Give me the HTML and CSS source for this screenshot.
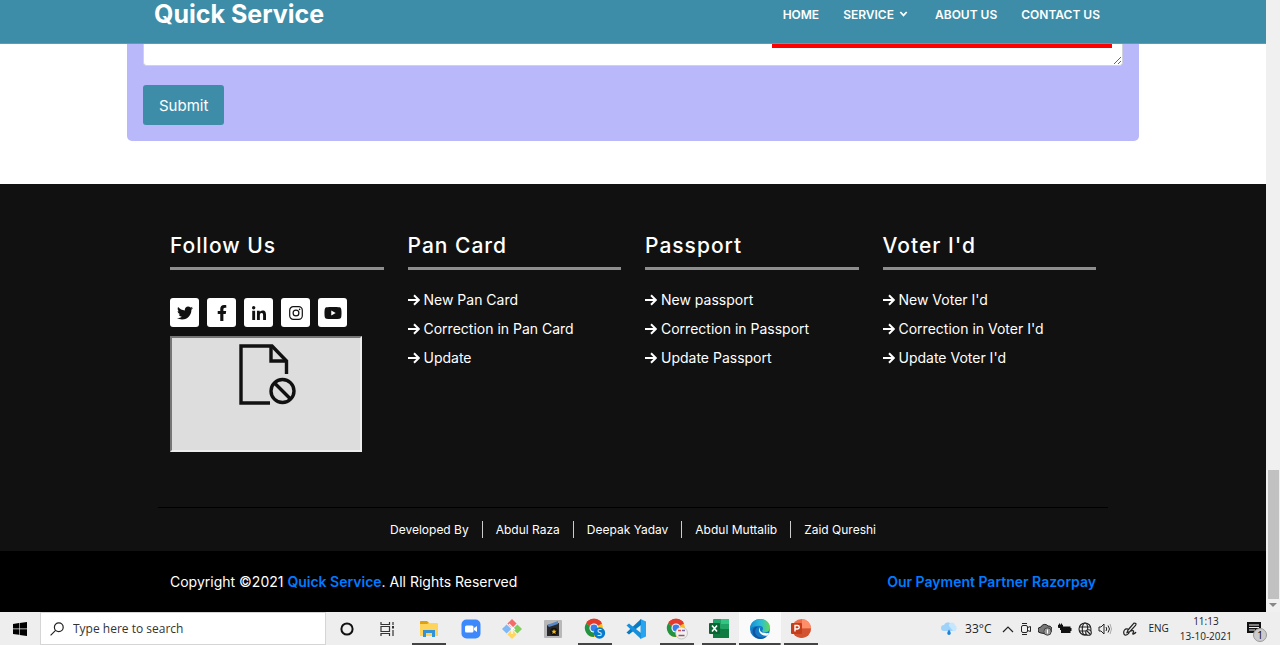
FILE: index.html
```html
<!DOCTYPE html>
<html lang="en">
<head>
<meta charset="utf-8">
<meta name="viewport" content="width=device-width, initial-scale=1">
<title>Quick Service</title>
<link rel="stylesheet" href="styles.css">
</head>
<body>
<svg class="defs" aria-hidden="true">
  <symbol id="arrow" viewBox="0 0 12 12"><path d="M0 6h10.5M6 1.2L10.8 6 6 10.8" fill="none" stroke="currentColor" stroke-width="2"/></symbol>
  <symbol id="chrome" viewBox="0 0 22 22">
    <circle cx="11" cy="11" r="10" fill="#fbc116"/>
    <path d="M11 11L2.3 6A10 10 0 0 1 19.7 6z" fill="#e33b2e"/>
    <path d="M11 11L2.3 6A10 10 0 0 0 11 21z" fill="#229342"/>
    <path d="M2.3 6A10 10 0 0 1 19.7 6H11z" fill="#e33b2e"/>
    <circle cx="11" cy="11" r="5" fill="#fff"/><circle cx="11" cy="11" r="3.8" fill="#3b7ded"/>
  </symbol>
</svg>
<div class="browser">
  <div class="page">
    <header class="header">
      <a class="brand" href="#">Quick Service</a>
      <nav class="nav">
        <a href="#">HOME</a>
        <a href="#" class="has-menu">SERVICE <svg width="9" height="6" viewBox="0 0 8 6"><path d="M.8 1L4 4.400 7.200 1" fill="none" stroke="currentColor" stroke-width="1.800"/></svg></a>
        <a href="#">ABOUT US</a>
        <a href="#">CONTACT US</a>
      </nav>
    </header>
    <main class="main">
      <form class="form">
        <span class="marker"></span>
        <textarea class="message" aria-label="Message"></textarea>
        <button class="submit" type="button">Submit</button>
      </form>
    </main>
    <footer class="footer">
      <div class="columns">
        <section class="column">
          <h2>Follow Us</h2>
          <div class="social">
            <a href="#" aria-label="Twitter"><svg width="16" height="16" viewBox="0 0 512 512"><path d="M459.37 151.716c.325 4.548.325 9.097.325 13.645 0 138.72-105.583 298.558-298.558 298.558-59.452 0-114.68-17.219-161.137-47.106 8.447.974 16.568 1.299 25.34 1.299 49.055 0 94.213-16.568 130.274-44.832-46.132-.975-84.792-31.188-98.112-72.772 6.498.974 12.995 1.624 19.818 1.624 9.421 0 18.843-1.3 27.614-3.573-48.081-9.747-84.143-51.98-84.143-102.985v-1.299c13.969 7.797 30.214 12.67 47.431 13.319-28.264-18.843-46.781-51.005-46.781-87.391 0-19.492 5.197-37.36 14.294-52.954 51.655 63.675 129.3 105.258 216.365 109.807-1.624-7.797-2.599-15.918-2.599-24.04 0-57.828 46.782-104.934 104.934-104.934 30.213 0 57.502 12.67 76.67 33.137 23.715-4.548 46.456-13.32 66.599-25.34-7.798 24.366-24.366 44.833-46.132 57.827 21.117-2.273 41.584-8.122 60.426-16.243-14.292 20.791-32.161 39.308-52.628 54.253z"/></svg></a>
            <a href="#" aria-label="Facebook"><svg width="10" height="16" viewBox="0 0 320 512"><path d="M279.14 288l14.22-92.66h-88.91v-60.13c0-25.35 12.42-50.06 52.24-50.06h40.42V6.26S260.43 0 225.36 0c-73.22 0-121.08 44.38-121.08 124.72v70.62H22.89V288h81.39v224h100.17V288z"/></svg></a>
            <a href="#" aria-label="LinkedIn"><svg width="14" height="14" viewBox="0 0 448 448"><path d="M100.28 448H7.4V148.9h92.88zM53.79 108.1C24.09 108.1 0 83.5 0 53.8a53.79 53.79 0 0 1 107.58 0c0 29.7-24.1 54.3-53.79 54.3zM447.9 448h-92.68V302.4c0-34.7-.7-79.2-48.29-79.2-48.29 0-55.69 37.7-55.69 76.7V448h-92.78V148.9h89.08v40.8h1.3c12.4-23.5 42.69-48.3 87.88-48.3 94 0 111.28 61.9 111.28 142.3V448z"/></svg></a>
            <a href="#" aria-label="Instagram"><svg width="14" height="14" viewBox="0 0 14 14" fill="none" stroke="#111" stroke-width="1.2"><rect x=".7" y=".7" width="12.6" height="12.6" rx="3.6"/><circle cx="7" cy="7" r="2.9"/><circle cx="10.6" cy="3.4" r=".8" fill="#111" stroke="none"/></svg></a>
            <a href="#" aria-label="YouTube"><svg width="18" height="16" viewBox="0 0 576 512"><path d="M549.655 124.083c-6.281-23.65-24.787-42.276-48.284-48.597C458.781 64 288 64 288 64S117.22 64 74.629 75.486c-23.497 6.322-42.003 24.947-48.284 48.597-11.412 42.867-11.412 132.305-11.412 132.305s0 89.438 11.412 132.305c6.281 23.65 24.787 41.5 48.284 47.821C117.22 448 288 448 288 448s170.78 0 213.371-11.486c23.497-6.321 42.003-24.171 48.284-47.821 11.412-42.867 11.412-132.305 11.412-132.305s0-89.438-11.412-132.305zm-317.51 213.508V175.185l142.739 81.205-142.739 81.201z"/></svg></a>
          </div>
          <div class="embed">
            <svg width="58" height="62" viewBox="0 0 58 62" fill="none" stroke="#111" stroke-width="3.4"><path d="M31 59H2V2h31l14.5 15v13"/><path d="M32 2v15h15.500"/><circle cx="43.500" cy="47" r="11.500"/><path d="M35.500 39l16 16"/></svg>
          </div>
        </section>
        <section class="column">
          <h2>Pan Card</h2>
          <ul>
            <li><a href="#"><svg width="12" height="12"><use href="#arrow"/></svg>New Pan Card</a></li>
            <li><a href="#"><svg width="12" height="12"><use href="#arrow"/></svg>Correction in Pan Card</a></li>
            <li><a href="#"><svg width="12" height="12"><use href="#arrow"/></svg>Update</a></li>
          </ul>
        </section>
        <section class="column">
          <h2>Passport</h2>
          <ul>
            <li><a href="#"><svg width="12" height="12"><use href="#arrow"/></svg>New passport</a></li>
            <li><a href="#"><svg width="12" height="12"><use href="#arrow"/></svg>Correction in Passport</a></li>
            <li><a href="#"><svg width="12" height="12"><use href="#arrow"/></svg>Update Passport</a></li>
          </ul>
        </section>
        <section class="column">
          <h2>Voter I'd</h2>
          <ul>
            <li><a href="#"><svg width="12" height="12"><use href="#arrow"/></svg>New Voter I'd</a></li>
            <li><a href="#"><svg width="12" height="12"><use href="#arrow"/></svg>Correction in Voter I'd</a></li>
            <li><a href="#"><svg width="12" height="12"><use href="#arrow"/></svg>Update Voter I'd</a></li>
          </ul>
        </section>
      </div>
      <div class="credits">
        <a href="#">Developed By</a><a href="#">Abdul Raza</a><a href="#">Deepak Yadav</a><a href="#">Abdul Muttalib</a><a href="#">Zaid Qureshi</a>
      </div>
      <div class="legal">
        <div class="legal-inner">
          <p>Copyright ©2021 <a href="#">Quick Service</a>. All Rights Reserved</p>
          <a href="#">Our Payment Partner Razorpay</a>
        </div>
      </div>
    </footer>
  </div>
  <div class="scrollbar">
    <div class="thumb"></div>
    <svg width="8" height="5" viewBox="0 0 8 5"><path d="M0 0h8L4 4z" fill="#888"/></svg>
  </div>
</div>
<div class="taskbar">
  <button class="start" type="button" aria-label="Start"><svg width="14" height="14" viewBox="0 0 14 14"><path d="M0 2l6-.9v5.500H0zM6.600 1L14 0v6.600H6.600zM0 7.300h6v5.500L0 12zM6.600 7.300H14V14l-7.400-1z"/></svg></button>
  <label class="search">
    <svg width="14" height="14" viewBox="0 0 14 14" fill="none" stroke="#222" stroke-width="1.2"><circle cx="8.800" cy="5.200" r="4.400"/><path d="M5.600 8.400L.6 13.400"/></svg>
    <input type="text" placeholder="Type here to search" aria-label="Type here to search">
  </label>
  <div class="apps">
    <button type="button" aria-label="Cortana"><svg width="14" height="14" viewBox="0 0 14 14"><circle cx="7" cy="7" r="5.600" fill="none" stroke="#111" stroke-width="2"/></svg></button>
    <button type="button" aria-label="Task view"><svg width="15" height="14" viewBox="0 0 15 14" fill="none" stroke="#333" stroke-width="1.200"><path d="M1 0v2.500h8.500V0M1 14v-2.500h8.500V14M1 4.500h8.500v5H1zM13 0v3M13 8v6"/><path d="M12 4h2v2.500h-2z" fill="#333" stroke="none"/></svg></button>
    <button type="button" class="open" aria-label="File Explorer"><svg width="20" height="18" viewBox="0 0 20 18"><path d="M1 2q0-1 1-1h6l2 2h8q1 0 1 1v12H1z" fill="#ffd45c"/><path d="M1 2q0-1 1-1h6l2 2-2 1H1z" fill="#dfa00d"/><path d="M4 17v-7h12v7h-3v-4H7v4z" fill="#3292d8"/></svg></button>
    <button type="button" aria-label="Zoom"><svg width="20" height="20" viewBox="0 0 20 20"><rect x=".5" y=".5" width="19" height="19" rx="5" fill="#3d88fb"/><rect x="4" y="6.500" width="8.500" height="7" rx="1.500" fill="#fff"/><path d="M13 9l3-2v6l-3-2z" fill="#fff"/></svg></button>
    <button type="button" aria-label="Git"><svg width="20" height="20" viewBox="0 0 20 20"><path d="M10 0l4.600 4.600L10 9.200 5.400 4.600z" fill="#f36b6b"/><path d="M15.400 5.400L20 10l-4.600 4.600-4.600-4.600z" fill="#83cf5d"/><path d="M4.600 5.400L9.200 10l-4.600 4.600L0 10z" fill="#80b7f5"/><path d="M10 10.800l4.600 4.600L10 20l-4.600-4.600z" fill="#ffd65f"/><path d="M7 5l6 6M10 8v7" stroke="#fff" stroke-width="1.300"/></svg></button>
    <button type="button" aria-label="Media"><svg width="18" height="18" viewBox="0 0 18 18"><rect width="18" height="18" rx="1" fill="#b8b8b8"/><path d="M3 5l12-2v13H3z" fill="#292929"/><path d="M3 5l11-4v3L5 7z" fill="#5786c8"/><circle cx="10" cy="11.500" r="3.800" fill="#111"/><path d="M10 9l.7 1.800h2l-1.500 1.300.6 2-1.800-1.200-1.800 1.200.6-2-1.500-1.300h2z" fill="#f5bd15"/></svg></button>
    <button type="button" class="open" aria-label="Chrome profile S"><svg width="22" height="22" viewBox="0 0 22 22"><use href="#chrome" width="20" height="20"/><circle cx="15.500" cy="15" r="5.700" fill="#087bcb"/><text x="15.500" y="18" class="badge-letter">S</text></svg></button>
    <button type="button" aria-label="Visual Studio Code"><svg width="20" height="20" viewBox="0 0 20 20"><path d="M14.500 0L20 2.500v15L14.500 20z" fill="#27a4ef"/><path d="M15 0v6L3 15.500.5 13.500z" fill="#087bc5"/><path d="M15 20v-6L3 4.500.5 6.500z" fill="#1590dc"/></svg></button>
    <button type="button" class="open" aria-label="Chrome profile"><svg width="22" height="22" viewBox="0 0 22 22"><use href="#chrome" width="20" height="20"/><circle cx="15.500" cy="15" r="6" fill="#f3f0f0" stroke="#aaa" stroke-width=".6"/><path d="M12 12.500h3" stroke="#ec4d45" stroke-width="1.500"/><path d="M16 12.500h3" stroke="#7a62a8" stroke-width="1.500"/><path d="M12.500 17.500h6" stroke="#8b5e60" stroke-width="1.500"/></svg></button>
    <button type="button" class="open" aria-label="Excel"><svg width="20" height="19" viewBox="0 0 20 19"><rect x="4" width="16" height="19" rx="1" fill="#20a366"/><path d="M12 0h8v5h-8z" fill="#33c481"/><path d="M4 9.500h16V19H4z" fill="#107c41"/><path d="M12 5h8v5h-8z" fill="#21a366"/><rect y="4" width="11" height="11" rx="1" fill="#0b6433"/><path d="M3 6.500l5 6M8 6.500l-5 6" stroke="#fff" stroke-width="1.600"/></svg></button>
    <button type="button" class="open current" aria-label="Edge"><svg width="20" height="20" viewBox="0 0 20 20"><defs><linearGradient id="edge-top" x1="0" x2="1"><stop stop-color="#168bd4"/><stop offset=".55" stop-color="#2dbfd4"/><stop offset="1" stop-color="#67d951"/></linearGradient></defs><circle cx="10" cy="10" r="10" fill="#127ac7"/><path d="M0 9C1-3 20-3 20 9c0 4-6 6-8 3 3-4-1-6-5-5-3 0-6 1-7 4z" fill="url(#edge-top)"/><path d="M8 8c-7 5 0 14 9 9-3 4-10 4-13 0-3-5-1-10 4-9z" fill="#16559e"/><path d="M10.500 8c-2 3 0 7 8.500 6l-1.500 2.500C12 18 6 12 10.500 8z" fill="#f8f8f8"/></svg></button>
    <button type="button" class="open" aria-label="PowerPoint"><svg width="20" height="19" viewBox="0 0 20 19"><circle cx="10.500" cy="9.500" r="9.500" fill="#ed6c47"/><path d="M11 0a9.500 9.500 0 0 1 9 9.500h-9z" fill="#ff8f6b"/><path d="M1 9.500h19a9.500 9.500 0 0 1-19 0z" fill="#d35230"/><rect y="4" width="11" height="11" rx="1" fill="#c43e1c"/><path d="M4 12.500v-6h2.500a1.700 1.700 0 0 1 0 3.500H4" fill="none" stroke="#fff" stroke-width="1.400"/></svg></button>
  </div>
  <div class="tray">
    <div class="weather"><svg width="16" height="16" viewBox="0 0 16 16"><path d="M3 10a3 3 0 0 1 0-6 4 4 0 0 1 7-1 4 4 0 0 1 3 7z" fill="#9dd3fa"/><path d="M8 5a3 3 0 0 1 6-1q2 1 1.500 4T12 10z" fill="#c5e6fd"/><path d="M8 8.500q-3.500 5 0 5.500 3.500-.5 0-5.500" fill="#1683dc"/></svg><span>33°C</span></div>
    <div class="status">
      <svg width="12" height="14" viewBox="0 0 12 14"><path d="M1 10l5-5 5 5" fill="none" stroke="#222" stroke-width="1.200"/></svg>
      <svg width="12" height="14" viewBox="0 0 12 14" fill="none" stroke="#222"><rect x="1.500" y="3.500" width="6" height="7" rx="1.500"/><path d="M7.500 5.500l3-1v5l-3-1M2 1.500h5M2 12.500h5"/></svg>
      <svg width="14" height="14" viewBox="0 0 14 14"><path d="M3 11a3 3 0 0 1 0-6 4 4 0 0 1 7-1 3.500 3.500 0 0 1 3 6l-4 2z" fill="#777" stroke="#222"/><circle cx="9.500" cy="9.500" r="3.700" fill="#999" stroke="#444"/><path d="M9.500 7.500v4" stroke="#fff"/></svg>
      <svg width="14" height="12" viewBox="0 0 14 12"><path d="M3 3.500h9.500V5h1v3h-1v2H3z" fill="#111"/><path d="M.5 2h4v2.500h-4zM1.500.5V2M3.500.5V2M2.500 4v3" fill="#111" stroke="#111"/></svg>
      <svg width="14" height="14" viewBox="0 0 14 14" fill="none" stroke="#222" stroke-width="1.100"><circle cx="7" cy="7" r="6"/><ellipse cx="7" cy="7" rx="2.700" ry="6"/><path d="M1 5h12M1 9h7"/><circle cx="10.500" cy="10.500" r="2.800" fill="#eee"/><path d="M9 9l3 3"/></svg>
      <svg width="14" height="12" viewBox="0 0 14 12" fill="none" stroke="#222"><path d="M1 4h2l3-3v10L3 8H1zM8 4q1.500 2 0 4M10 2.500q3 3.500 0 7"/><path d="M12 1q3 5 0 10" stroke="#aaa"/></svg>
    </div>
    <svg width="14" height="14" viewBox="0 0 14 14" fill="none" stroke="#222" stroke-width="1.200"><path d="M5 8l6-7q3 0 1.500 2.500L7 9.500l-3 1zM5 7C2 6 0 9 1 12s6-1 5-2M8 9c3-1 3 0 2 2s2 1 3-1"/></svg>
    <span class="lang">ENG</span>
    <div class="clock"><span>11:13</span><span>13-10-2021</span></div>
    <button class="notice" type="button" aria-label="1 notification"><svg width="14" height="14" viewBox="0 0 14 14"><path d="M0 0h14v11h-3v3l-3-3H0z" fill="#111"/><path d="M2 3h10M2 5.500h10M2 8h6" stroke="#eee"/></svg><span class="count">1</span></button>
  </div>
</div>
</body>
</html>
```
FILE: styles.css
```css
* { box-sizing: border-box; }
body {
  margin: 0;
  min-height: 100vh;
  display: flex;
  flex-direction: column;
  font-family: Inter, "Open Sans", sans-serif;
  font-size: 14px;
  line-height: 21px;
  background: #fff;
  overflow: hidden;
}
a { color: inherit; text-decoration: none; }
button { font: inherit; border: 0; padding: 0; background: none; }
svg { display: block; flex: none; }
h2, p, ul { margin: 0; padding: 0; }
ul { list-style: none; }
.defs { position: absolute; width: 0; height: 0; }

.browser { flex: 1; display: flex; }
.page { flex: 1; display: flex; flex-direction: column; }

.header {
  display: flex;
  justify-content: space-between;
  align-items: center;
  padding: 0 calc(50% - 467px) 15px calc(50% - 479px);
  background: #3d8da8;
  border-bottom: 1px solid #5b9db4;
  color: #fff;
}
.brand { font-size: 25px; font-weight: 700; line-height: 28px; }
.nav { display: flex; gap: 24px; font-size: 12px; font-weight: 600; }
.has-menu { display: flex; align-items: center; gap: 5px; padding-right: 3px; }

.main { padding: 0 24px 43px; }
.form {
  position: relative;
  max-width: 1012px;
  margin: 0 auto;
  padding: 0 16px 16px;
  background: #b8b8fa;
  border-radius: 0 0 5px 5px;
}
.message {
  display: block;
  width: 100%;
  height: 22px;
  margin-bottom: 19px;
  border: 1px solid #ced4da;
  border-top: 0;
  border-radius: 0 0 4px 4px;
  background: #fff;
  resize: vertical;
}
.marker {
  position: absolute;
  top: 0;
  right: 27px;
  width: 340px;
  height: 4px;
  background: #f00;
}
.submit {
  height: 40px;
  padding: 0 16px;
  border-radius: 3px;
  background: #3d8da8;
  color: #fff;
  font-size: 15px;
}

.footer { flex: 1; display: flex; flex-direction: column; background: #111; color: #fff; }
.columns {
  width: 100%;
  max-width: 950px;
  margin: 0 auto;
  padding: 48px 0 55px;
  display: grid;
  grid-template-columns: repeat(4, 1fr);
  border-bottom: 1px solid #000;
}
.column { padding: 0 12px; }
.column h2 {
  margin-bottom: 19px;
  padding-bottom: 7px;
  border-bottom: 3px solid #8e8e8e;
  font-size: 21px;
  font-weight: 500;
  line-height: 28px;
  letter-spacing: 1px;
}
.column li { margin-bottom: 8px; }
.column li a { display: flex; align-items: center; gap: 4px; white-space: nowrap; }
.social { display: flex; gap: 8px; padding: 9px 0; }
.social a {
  width: 29px;
  height: 29px;
  display: grid;
  place-items: center;
  border-radius: 3px;
  background: #fff;
}
.social svg { fill: #111; }
.social svg[fill="none"] { fill: none; }
.embed {
  width: 192px;
  height: 116px;
  display: flex;
  justify-content: center;
  align-items: flex-start;
  padding: 6px 0 0 4px;
  border: 2px solid;
  border-color: #767676 #ededed #ededed #767676;
  background: #ddd;
}
.credits { display: flex; justify-content: center; padding: 13px 0; font-size: 12px; line-height: 17px; }
.credits a { padding: 0 13px; }
.credits a + a { border-left: 1px solid #ccc; }
.legal { flex: 1; display: flex; align-items: center; background: #000; }
.legal-inner {
  width: 100%;
  max-width: 950px;
  margin: 0 auto;
  padding: 0 12px;
  display: flex;
  justify-content: space-between;
}
.legal a { color: #007bff; font-weight: 600; }

.scrollbar {
  width: 14px;
  display: flex;
  flex-direction: column;
  justify-content: flex-end;
  align-items: center;
  gap: 4px;
  padding-bottom: 4px;
  background: #f0f0f0;
}
.thumb { width: 11px; height: 129px; background: #c1c1c1; }

.taskbar {
  height: 33px;
  display: flex;
  background: #eee;
  color: #222;
  font-family: "Open Sans", "Noto Sans", sans-serif;
  font-size: 11px;
  line-height: 15px;
}
.start { width: 40px; display: grid; place-items: center; }
.search {
  width: 286px;
  display: flex;
  align-items: center;
  gap: 9px;
  padding-left: 9px;
  background: #fff;
  border: 1px solid #d5d5d5;
}
.search input { flex: 1; min-width: 0; border: 0; padding: 0; font: inherit; font-size: 12px; background: none; }
.search input::placeholder { color: #333; opacity: 1; }
.apps { width: 496px; display: grid; grid-template-columns: repeat(12, 1fr); }
.apps button { display: grid; place-items: center; }
.apps .open { background: linear-gradient(#444, #444) center bottom / 34px 2px no-repeat; }
.apps .current { background-color: #fafafa; background-size: 100% 2px; }
.badge-letter { font: 9px "Open Sans", sans-serif; fill: #fff; text-anchor: middle; }
.tray { margin-left: auto; display: flex; align-items: center; gap: 11px; padding-right: 19px; }
.weather { display: flex; align-items: center; gap: 8px; font-size: 12px; }
.status { display: flex; align-items: center; gap: 6px; }
.lang { font-size: 10px; }
.clock { display: flex; flex-direction: column; align-items: center; font-size: 10px; }
.notice { position: relative; margin-left: 4px; }
.count {
  position: absolute;
  left: 6px;
  top: 6px;
  width: 14px;
  height: 14px;
  border: 1px solid #999;
  border-radius: 50%;
  background: #ccc;
  font-size: 10px;
  line-height: 12px;
}
```
